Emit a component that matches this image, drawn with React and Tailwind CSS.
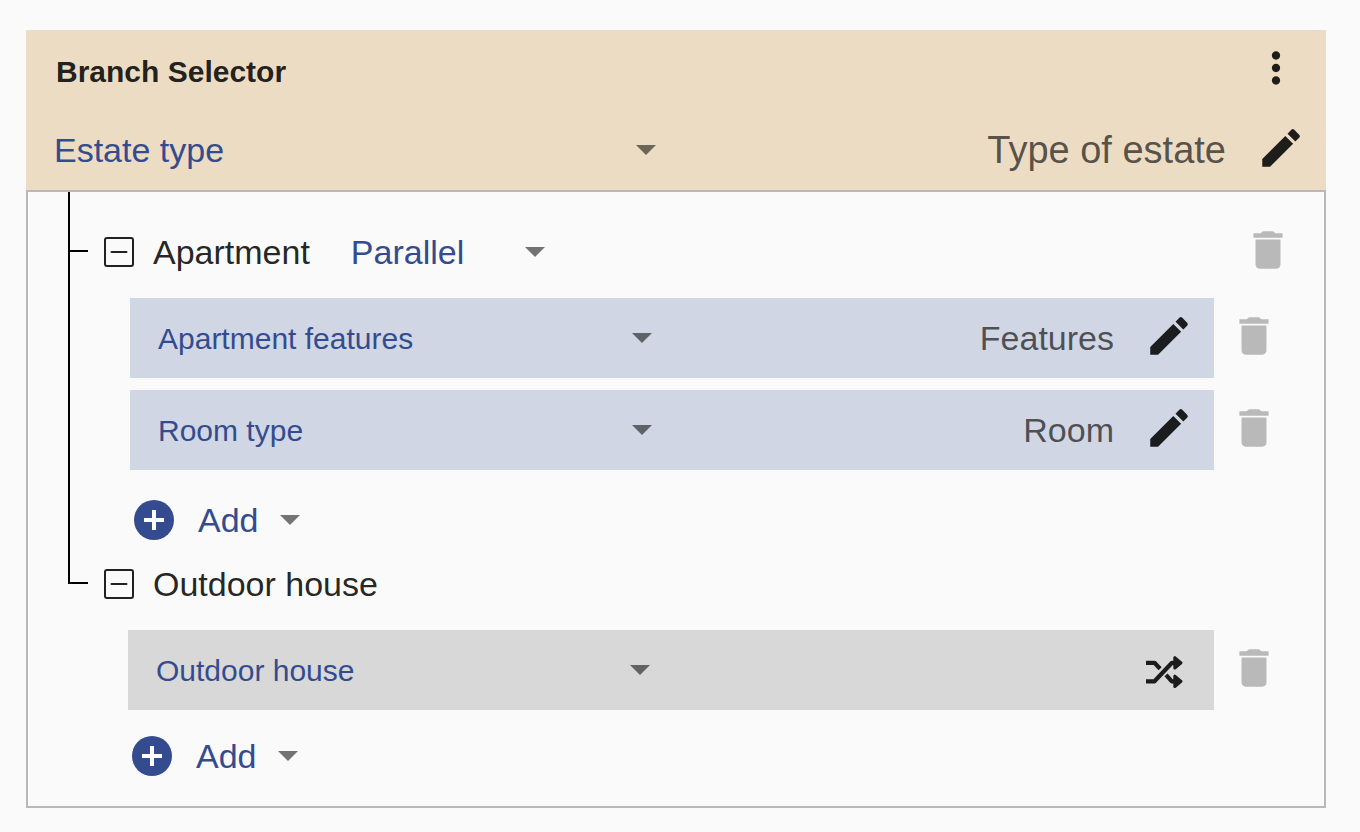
import { MdEdit, MdMoreVert } from "react-icons/md";

const branches = [
  {
    name: "Apartment",
    mode: "Parallel",
    removable: true,
    indent: "pl-[42px]",
    addSpacing: "mt-[30px] pb-1",
    steps: [
      { type: "Apartment features", label: "Features", color: "bg-[#d0d6e3]" },
      { type: "Room type", label: "Room", color: "bg-[#d0d6e3]" },
    ],
  },
  {
    name: "Outdoor house",
    indent: "pl-10",
    addSpacing: "mt-[26px]",
    steps: [{ type: "Outdoor house", shuffle: true, color: "bg-[#d8d8d8]" }],
  },
];

function ArrowIcon({ className }) {
  return (
    <svg width="20" height="10" viewBox="0 0 20 10" fill="currentColor" className={className} aria-hidden="true">
      <path d="M0 0h20L10 10z" />
    </svg>
  );
}

function TrashIcon() {
  return (
    <svg width="50" height="50" viewBox="0 0 24 24" fill="currentColor" aria-hidden="true">
      <path d="M6 19c0 1.1.9 2 2 2h8c1.1 0 2-.9 2-2V7H6v12z" />
      <path d="M19 4h-3.3c-.5 0-.8-1-1.8-1h-3.8c-1 0-1.3 1-1.8 1H5v2.1h14V4z" />
    </svg>
  );
}

function ShuffleIcon() {
  return (
    <svg width="50" height="50" viewBox="0 0 50 50" fill="none" stroke="#1c1c1c" strokeWidth="4.2" aria-hidden="true">
      <path d="M2 19.8h8.5l5.6 6M2 38.3h8.5L28 19.8H31M22 31.8l5.8 6.5H31" strokeLinejoin="round" />
      <path
        d="M30.8 14.6v10.4l6.2-5.2zM30.8 33.1v10.4l6.2-5.2z"
        fill="#1c1c1c"
        strokeWidth="3"
        strokeLinejoin="round"
      />
    </svg>
  );
}

function CollapseIcon() {
  return (
    <svg width="30" height="30" viewBox="0 0 30 30" fill="none" stroke="currentColor" strokeWidth="2" aria-hidden="true">
      <rect x="1" y="1" width="28" height="28" rx="2" />
      <path d="M7.5 15h15" strokeLinecap="round" />
    </svg>
  );
}

function AddIcon() {
  return (
    <svg width="40" height="40" viewBox="0 0 40 40" aria-hidden="true">
      <circle cx="20" cy="20" r="20" fill="#344c8f" />
      <path d="M20 10v20M10 20h20" stroke="#fff" strokeWidth="4" />
    </svg>
  );
}

function IconButton({ label, className = "text-black/87", children }) {
  return (
    <button type="button" aria-label={label} className={`shrink-0 cursor-pointer pb-1 ${className}`}>
      {children}
    </button>
  );
}

function Dropdown({ label, value, className }) {
  return (
    <div className={`relative flex items-center ${className}`}>
      <select
        aria-label={label}
        defaultValue={value}
        className="w-full cursor-pointer appearance-none bg-transparent pr-12 text-[#344c8f] outline-none"
      >
        <option>{value}</option>
      </select>
      <ArrowIcon className="pointer-events-none absolute right-3.5 text-black/54" />
    </div>
  );
}

function Step({ step }) {
  return (
    <li className="flex items-center gap-[15px] pr-[45px]">
      <div className={`flex h-20 min-w-0 flex-1 items-center justify-between pl-7 pr-5 ${step.color}`}>
        <Dropdown label="Step type" value={step.type} className="min-w-0 max-w-[508px] flex-1 text-[30px]" />
        <div className="flex items-center gap-[30px]">
          {step.label && <span className="text-[34px] text-black/65">{step.label}</span>}
          <IconButton label={step.shuffle ? "Change step" : "Edit step"}>
            {step.shuffle ? <ShuffleIcon /> : <MdEdit size={50} />}
          </IconButton>
        </div>
      </div>
      <IconButton label="Delete step" className="text-[#b9b9b9]">
        <TrashIcon />
      </IconButton>
    </li>
  );
}

function Branch({ branch, last }) {
  return (
    <li className="flex">
      <div className="flex w-5 shrink-0 flex-col">
        <div className="h-10 border-b-2 border-l-2 border-black" />
        {!last && <div className="flex-1 border-l-2 border-black" />}
      </div>

      <div className="min-w-0 flex-1">
        <div className="flex h-20 items-center pl-4 pr-[31px] text-[34px]">
          <button type="button" aria-label="Collapse branch" className="mr-[19px] cursor-pointer">
            <CollapseIcon />
          </button>
          <h3>{branch.name}</h3>
          {branch.mode && <Dropdown label="Branch mode" value={branch.mode} className="ml-[41px] w-52" />}
          {branch.removable && (
            <div className="ml-auto flex">
              <IconButton label="Delete branch" className="text-[#b9b9b9]">
                <TrashIcon />
              </IconButton>
            </div>
          )}
        </div>

        <div className={`pt-1.5 ${branch.indent}`}>
          <ul className="flex flex-col gap-3">
            {branch.steps.map((step) => (
              <Step key={step.type} step={step} />
            ))}
          </ul>
          <div className={`pl-1 ${branch.addSpacing}`}>
            <button type="button" className="flex h-10 cursor-pointer items-center text-[34px] text-[#344c8f]">
              <AddIcon />
              <span className="ml-6 mr-[21px]">Add</span>
              <ArrowIcon className="text-black/54" />
            </button>
          </div>
        </div>
      </div>
    </li>
  );
}

export default function App() {
  return (
    <main className="min-h-screen bg-[#fafafa] pb-6 pl-[26px] pr-[34px] pt-[30px] font-['Liberation_Sans',Arial,sans-serif] text-black/87">
      <header className="flex flex-col gap-[22px] bg-[#ecdcc4] py-[13px]">
        <div className="flex items-start justify-between pl-[30px] pr-[25px]">
          <h2 className="text-[30px] font-bold leading-[58px]">Branch Selector</h2>
          <IconButton label="More options">
            <MdMoreVert size={50} />
          </IconButton>
        </div>
        <div className="flex items-center justify-between pl-7 pr-5">
          <Dropdown label="Selector type" value="Estate type" className="min-w-0 max-w-[616px] flex-1 text-[34px]" />
          <div className="flex items-center gap-[30px]">
            <span className="text-[38px] leading-[50px] text-black/65">Type of estate</span>
            <IconButton label="Edit selector">
              <MdEdit size={50} />
            </IconButton>
          </div>
        </div>
      </header>

      <section className="border-2 border-[#b9b9b9] pb-[30px] pl-10">
        <div className="h-5 border-l-2 border-black" />
        <ul>
          {branches.map((branch, i) => (
            <Branch key={branch.name} branch={branch} last={i === branches.length - 1} />
          ))}
        </ul>
      </section>
    </main>
  );
}
